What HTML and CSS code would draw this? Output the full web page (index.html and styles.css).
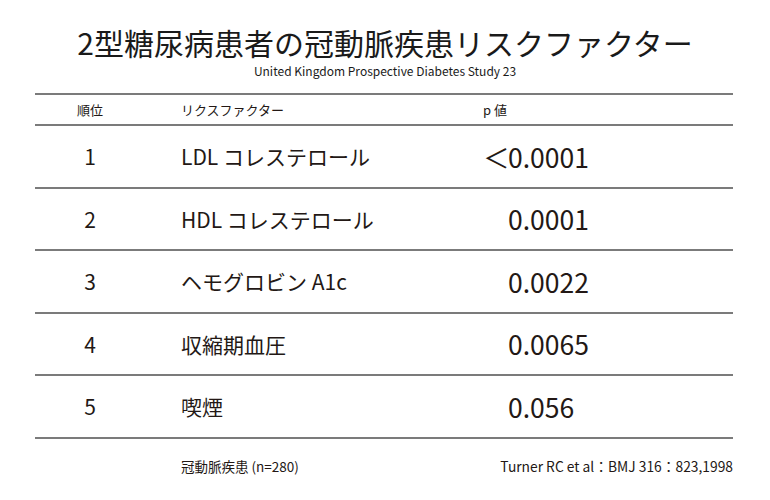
FILE: index.html
```html
<!DOCTYPE html>
<html lang="ja">
<head>
<meta charset="utf-8">
<title>2型糖尿病患者の冠動脈疾患リスクファクター</title>
<link rel="stylesheet" href="styles.css">
</head>
<body>
<div class="page">
  <header class="head">
    <h1 class="title">2型糖尿病患者の冠動脈疾患リスクファクター</h1>
    <p class="subtitle">United Kingdom Prospective Diabetes Study 23</p>
  </header>
  <div class="table">
    <div class="row row-head">
      <div class="c-rank">順位</div>
      <div class="c-factor">リクスファクター</div>
      <div class="c-p">p 値</div>
    </div>
    <div class="row">
      <div class="c-rank">1</div>
      <div class="c-factor">LDL コレステロール</div>
      <div class="c-p pv"><span class="lt">＜</span>0.0001</div>
    </div>
    <div class="row">
      <div class="c-rank">2</div>
      <div class="c-factor">HDL コレステロール</div>
      <div class="c-p pv">0.0001</div>
    </div>
    <div class="row">
      <div class="c-rank">3</div>
      <div class="c-factor">ヘモグロビン A1c</div>
      <div class="c-p pv">0.0022</div>
    </div>
    <div class="row">
      <div class="c-rank">4</div>
      <div class="c-factor">収縮期血圧</div>
      <div class="c-p pv">0.0065</div>
    </div>
    <div class="row">
      <div class="c-rank">5</div>
      <div class="c-factor">喫煙</div>
      <div class="c-p pv">0.056</div>
    </div>
    <div class="foot">
      <div class="c-rank"></div>
      <div class="c-factor">冠動脈疾患 (n=280)</div>
      <div class="cite">Turner RC et al：BMJ 316：823,1998</div>
    </div>
  </div>
</div>
</body>
</html>
```
FILE: styles.css
```css
html, body {
  margin: 0;
  padding: 0;
  background: #ffffff;
}
body {
  font-family: "Noto Sans CJK JP", "Noto Sans", sans-serif;
  color: #231815;
}
.page {
  width: 770px;
  height: 500px;
  padding-top: 24px;
  box-sizing: border-box;
}
.head {
  text-align: center;
}
.title {
  margin: 0;
  font-size: 30px;
  font-weight: 400;
  line-height: 36px;
  color: #1a1a1a;
}
.subtitle {
  margin: 4px 0 0;
  font-size: 12px;
  line-height: 14px;
  color: #1a1a1a;
}
.table {
  margin: 15px 37px 0 35px;
  border-top: 2px solid #7b7b7b;
}
.row {
  display: grid;
  grid-template-columns: 146px 302px 1fr;
  align-items: center;
  height: 60.5px;
  border-bottom: 2px solid #7b7b7b;
  font-size: 21px;
}
.row-head {
  height: 29px;
  font-size: 13px;
}
.c-rank {
  width: 110px;
  text-align: center;
}
.pv {
  font-size: 26.5px;
  padding-left: 25px;
}
.lt {
  display: inline-block;
  width: 25px;
  margin-left: -25px;
}
.foot {
  display: grid;
  grid-template-columns: 146px 1fr auto;
  align-items: center;
  height: 54px;
  font-size: 13.5px;
}
.cite {
  text-align: right;
  font-size: 13.8px;
}
```
